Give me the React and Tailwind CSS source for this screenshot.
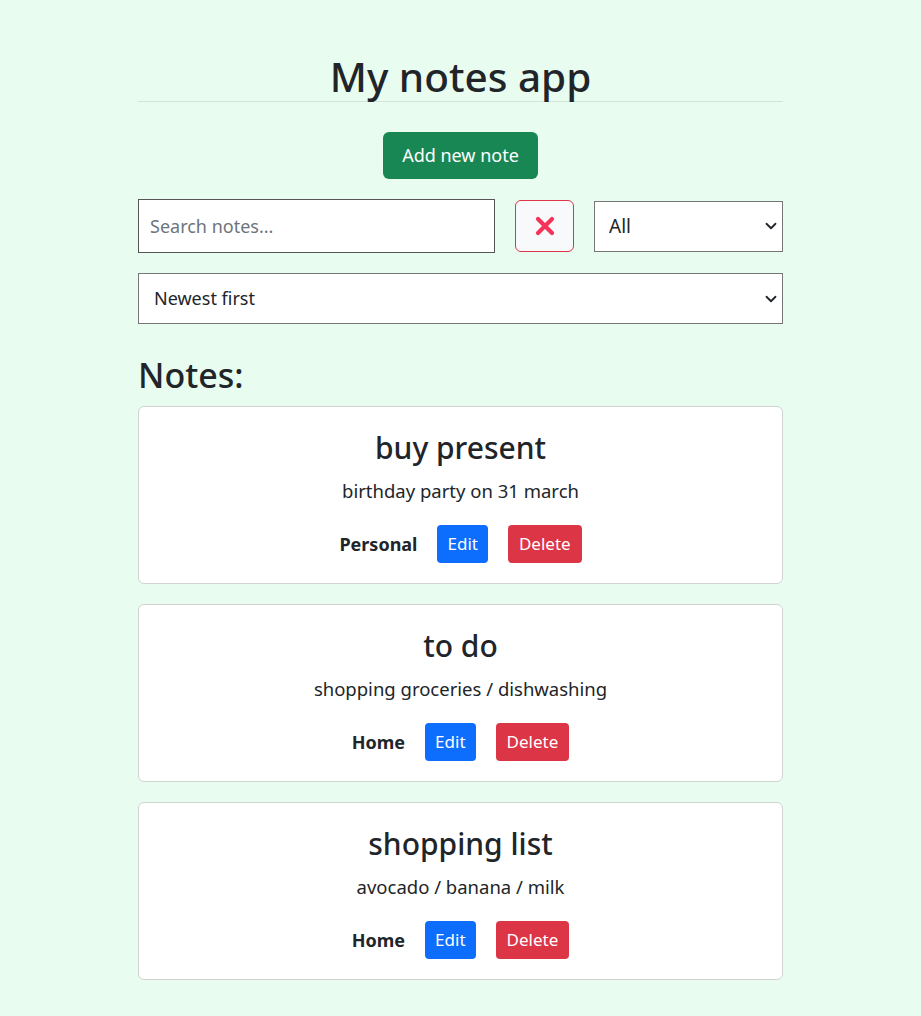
import React, { useState } from 'react';

const notes = [
  { title: 'buy present', body: 'birthday party on 31 march', category: 'Personal' },
  { title: 'to do', body: 'shopping groceries / dishwashing', category: 'Home' },
  { title: 'shopping list', body: 'avocado / banana / milk', category: 'Home' },
];

function Chevron() {
  return (
    <svg width="12" height="12" viewBox="0 0 16 16" className="absolute right-[6px] top-1/2 -translate-y-1/2 pointer-events-none">
      <path d="M2 5l6 6 6-6" fill="none" stroke="#212529" strokeWidth="2.4" strokeLinecap="round" strokeLinejoin="round" />
    </svg>
  );
}

function NoteCard({ note }) {
  return (
    <div className="bg-white border border-[#cfd4d0] rounded-[6px] h-[178px] flex flex-col items-center pt-[21px]">
      <h3 className="text-[30px] leading-[40px] font-medium text-[#212529]">{note.title}</h3>
      <p className="text-[18.5px] leading-[26px] mt-[10px] text-[#212529]">{note.body}</p>
      <div className="flex items-center gap-[20px] mt-[21px]">
        <span className="text-[18px] font-bold text-[#212529]">{note.category}</span>
        <button className="h-[38px] px-[10px] rounded-[4px] bg-[#0d6efd] text-white text-[17px]">Edit</button>
        <button className="h-[38px] px-[11px] rounded-[4px] bg-[#dc3545] text-white text-[17px]">Delete</button>
      </div>
    </div>
  );
}

export default function App() {
  const [search, setSearch] = useState('');

  return (
    <div className="min-h-[1016px] bg-[#e8fdf0] font-['Noto_Sans','Open_Sans',sans-serif] text-[#212529]">
      <div className="w-[645px] mx-auto pt-[52px]">
        <header className="border-b border-[#d5e3da] text-center h-[50px]">
          <h1 className="text-[40.5px] leading-[50px] font-medium">My notes app</h1>
        </header>

        <div className="flex justify-center mt-[30px]">
          <button className="h-[47px] w-[155px] rounded-[6px] bg-[#198754] text-white text-[18px]">Add new note</button>
        </div>

        <div className="flex items-center mt-[20px]">
          <input
            value={search}
            onChange={e => setSearch(e.target.value)}
            placeholder="Search notes..."
            className="w-[357px] h-[54px] border border-[#555] bg-white px-[11px] text-[18px] placeholder:text-[#6c757d] outline-none"
          />
          <button className="ml-[20px] w-[59px] h-[52px] rounded-[6px] border border-[#dc3545] bg-[#f8f9fa] flex items-center justify-center">
            <svg width="22" height="22" viewBox="0 0 22 22">
              <path d="M4 4L18 18M18 4L4 18" stroke="#f4325a" strokeWidth="4.2" strokeLinecap="round" />
            </svg>
          </button>
          <div className="relative ml-[20px] flex-1">
            <select className="appearance-none w-full h-[51px] border border-[#767676] bg-white pl-[14px] text-[19px] outline-none">
              <option>All</option>
              <option>Personal</option>
              <option>Home</option>
            </select>
            <Chevron />
          </div>
        </div>

        <div className="relative mt-[20px]">
          <select className="appearance-none w-full h-[51px] border border-[#767676] bg-white pl-[15px] text-[18px] outline-none">
            <option>Newest first</option>
            <option>Oldest first</option>
          </select>
          <Chevron />
        </div>

        <h2 className="text-[34px] leading-[40px] font-medium mt-[31px]">Notes:</h2>

        <div className="flex flex-col gap-[20px] mt-[11px]">
          {notes.map((note, i) => (
            <NoteCard key={i} note={note} />
          ))}
        </div>
      </div>
    </div>
  );
}
